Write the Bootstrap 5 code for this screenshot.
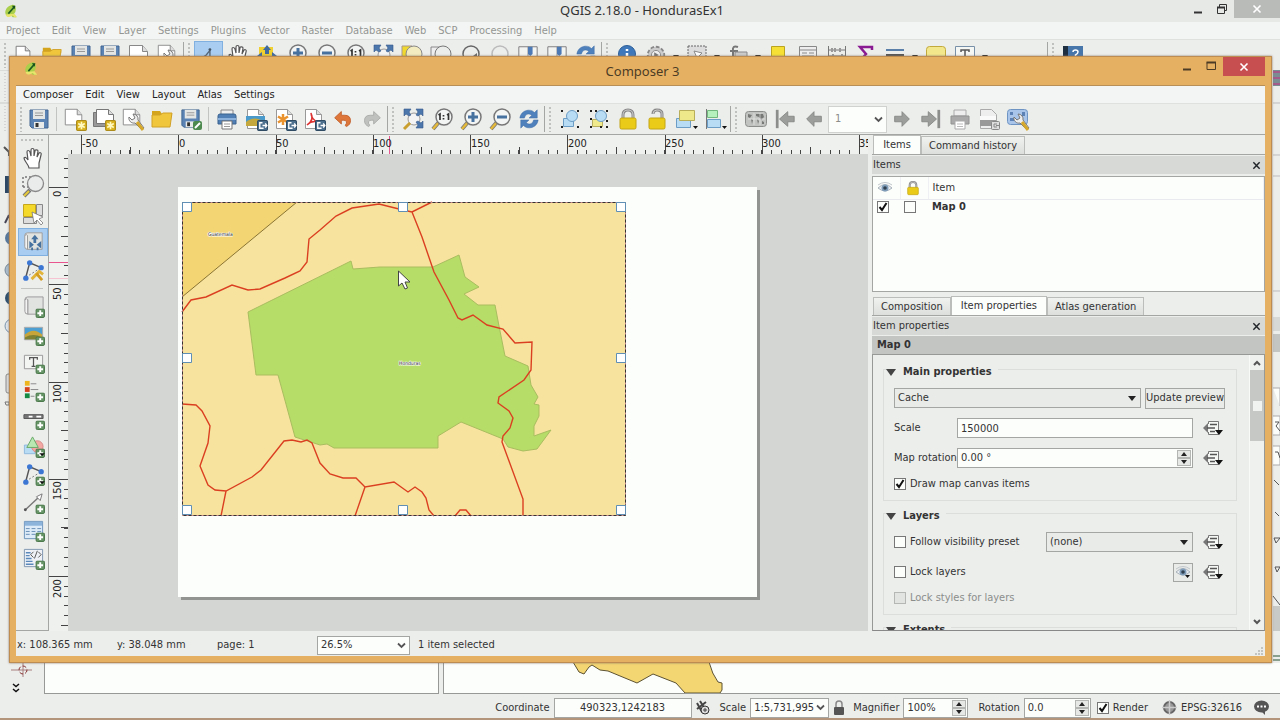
<!DOCTYPE html>
<html lang="en">
<head>
<meta charset="utf-8">
<meta name="viewport" content="width=device-width, initial-scale=1">
<title>QGIS 2.18.0 - HondurasEx1</title>
<link href="https://cdn.jsdelivr.net/npm/bootstrap@5.3.0/dist/css/bootstrap.min.css" rel="stylesheet">
<style>
:root{--face:#eceeec;--ink:#333;--line:#a4a6a4}
body{font:11px/14px "DejaVu Sans Condensed","DejaVu Sans",sans-serif;color:var(--ink);background:var(--face)}
.desk{min-height:720px}
button{color:inherit;font:inherit}
svg{flex:none;display:block}
.title-text{font:13px/20px "Noto Sans",sans-serif}
.win-title,.menu,.tools,.lower,.status,.taskbar,.comp-title,.comp-status{flex-shrink:0}
.half{flex:1 1 0}
.win-title{height:22px;background:#e7e9e7}
.win-ctl{width:30px;height:18px;border:0;background:none;padding:0}
.win-ctl.narrow{width:24px}
.win-ctl.gray-x{width:46px;background:#b9bbb9}
.menu{height:17px;background:#f3f5f4;column-gap:12px;padding-left:6px}
.menu a{color:#939593;text-decoration:none}
.menu .nav-link{padding:0}
.tools{background:var(--face)}
.main-tools{height:31px;border-top:1px solid #dfe1df}
.tbtn{width:29px;height:28px;border:1px solid transparent;background:none;padding:0;display:flex;align-items:center;justify-content:center;flex:none}
.tbtn.on{background:#a9cdf0;border-color:#7fb0e0}
.drop-mark{width:12px;display:flex;justify-content:center;padding-top:4px}
.grip{width:8px;height:26px;flex:none;background:radial-gradient(circle,#bfc1bf 1px,transparent 1px) 3px 0/4px 4px repeat-y}
.grip.split{width:11px;border-left:1px solid #a4a6a4;margin-left:1px;background-position:3px 0}
.sep{width:1px;height:24px;background:#c2c4c2;margin:0 3px;flex:none}
.lower{height:31px}
.pane{background:#fcfefc;border:1px solid #979997;border-top:0}
.pane-left{width:395px}
.status{height:24px;padding-top:3px}
.taskbar{height:2px;background:#b2957a}
.field{height:20px;border:1px solid var(--line);background:#fcfefc;border-radius:0;font:inherit;color:var(--ink);padding:0 3px;min-width:0}
select.field{appearance:none;background:#fcfefc url("data:image/svg+xml,%3Csvg xmlns='http://www.w3.org/2000/svg' viewBox='0 0 9 7'%3E%3Cpath d='M1 1.500l3.500 3.500 3.500-3.500' fill='none' stroke='%23555' stroke-width='1.800'/%3E%3C/svg%3E") no-repeat right 3px center/9px 7px}
select.field.flat{background:#e9ebe9 url("data:image/svg+xml,%3Csvg xmlns='http://www.w3.org/2000/svg' viewBox='0 0 8 5'%3E%3Cpath d='M0 0h8l-4 5z' fill='%23222'/%3E%3C/svg%3E") no-repeat right 4px center/8px 5px}
.spin{display:flex;border:1px solid var(--line);height:20px;background:#fcfefc;padding:1px}
.spin input{border:0;background:none;font:inherit;color:inherit;min-width:0;padding:0 2px;outline:0}
.spin button{width:14px;height:8px;border:1px solid #b4b6b4;background:#e6e8e6;padding:0;display:flex;align-items:center;justify-content:center}
.tick{appearance:none;width:12px;height:12px;margin:0;border:1px solid #777;background:#fcfefc;border-radius:0;flex:none}
.tick:checked{background:#fcfefc url("data:image/svg+xml,%3Csvg xmlns='http://www.w3.org/2000/svg' viewBox='0 0 10 10'%3E%3Cpath d='M1.500 5l2.500 3 4.500-7' fill='none' stroke='%23111' stroke-width='2'/%3E%3C/svg%3E") center/10px}
.tick:disabled{background:#e2e4e2;border-color:#b5b7b5}
.dim{color:#8b8d8b}
select.page-pick{width:59px;height:27px;border-color:#d0d2d0;padding-left:6px;color:#8b8d8b}

/* Composer window, floating on the main window */
.composer{position:absolute;top:56px;right:8px;bottom:57px;left:9px;background:#e6b062;border:1px solid #bd8c50;padding:0 6px 6px;box-shadow:0 0 2px #8a7a66}
.comp-title{height:28px;color:#4c3c25}
.comp-title .red-x{width:42px;height:19px;background:#c84f50}
.comp-face{background:var(--face);border-top:1px solid #b98f58}
.comp-menu{height:17px;padding-left:7px}
.comp-menu a{color:#222}
.comp-tools{height:32px;border-top:1px solid #dfe1df;border-bottom:1px solid var(--line)}
.side{width:33px;border-right:1px solid var(--line);border-bottom:1px solid var(--line)}
.side .tbtn{width:30px;height:28px;margin-left:2px}
.side-grip{height:9px;margin:0 4px;background:radial-gradient(circle,#bfc1bf 1px,transparent 1px) 0 3px/4px 4px repeat-x}
.side-sep{height:1px;margin:4px 5px 3px;background:#c2c4c2}
.sheet{display:grid;grid-template:19px minmax(0,1fr)/19px minmax(0,1fr);min-width:0;background:#eff1ef}
.sheet text{font-size:11px;fill:#222}
.sheet .place{font-size:5px;stroke:#fff;stroke-width:1px;paint-order:stroke}
.canvas{background:#d4d6d3}
.docks{width:393px;margin-left:4px}
.tabs{height:20px;border-bottom:1px solid var(--line);padding-left:1px;flex:none}
.tabs button{height:18px;border:1px solid #bbbdbb;border-bottom:0;background:linear-gradient(#f0f2f0,#dddfdd);padding:0 7px}
.tabs button.active{height:19px;background:#fcfefc}
.dock-title{height:18px;background:#d7d9d7;margin-top:1px;padding:0 4px 0 1px;flex:none}
.dock-title button{border:0;background:none;padding:0}
.items{height:116px;border:1px solid var(--line);background:#fcfefc;margin-top:2px;flex:none}
.items table{width:100%}
.items th{font-weight:400;height:22px;border-bottom:1px solid #e8eaf0;border-right:1px solid #eef0f4}
.items td,.items th{padding:0 0 0 4px;vertical-align:middle}
.items td{height:15px}
.item-name{height:18px;background:#c3c5c3;margin-top:1px;padding-left:5px;flex:none}
.props{border:1px solid #979997;border-bottom-color:#888;overflow:hidden}
.props form{padding:3px 12px 0 10px}
.box{border:1px solid #dcdedc;padding:8px 11px 10px 10px;margin:0 0 1px}
.box legend{float:none;width:auto;height:22px;margin:0 0 0 -8px;padding:6px 6px 0 0;font:bold 11px/16px "DejaVu Sans Condensed",sans-serif;display:flex;align-items:center;gap:7px;background:var(--face)}
.line{height:20px;display:flex;align-items:center}
.line.short{height:12px}
.lab{width:63px;flex:none;white-space:nowrap}
.plain{border:1px solid var(--line);background:#e9ebe9;height:21px;padding:0}
.dd{border:0;background:none;padding:0;width:22px;margin-left:10px;flex:none}
.bar{width:15px;background:#eff1ef;border-left:1px solid #f8faf8}
.thumb{height:71px;background:#c6c8c6}
.thumb i{width:9px;height:10px;background:#f1f3f1}
.comp-status{height:25px;padding:3px 0 0 1px}
.cell{width:100px}
.zoom-box{width:93px}
</style>
</head>
<body>
<svg width="0" height="0" class="position-absolute" aria-hidden="true">
<defs>
<symbol id="logo" viewBox="0 0 16 16"><path d="M2 12C0 7 4 2 9 1c5-1 5 5 4 8l-2 3 3 3h-4l-2-2c-3 2-5 1-6-1z" fill="#a9cf4b"/><path d="M2 12c0 4 5 3 8 1l2 2h3l-3-4" fill="#e8e56c"/><path d="M5 11L12 3" stroke="#1c5a22" stroke-width="1.800"/><path d="M9 2h4l-1 4z" fill="#17501d"/></symbol>
<symbol id="plus" viewBox="0 0 10 10"><rect x=".5" y=".5" width="9" height="9" rx="1.500" fill="#679467" stroke="#477447"/><path d="M5 2v6M2 5h6" stroke="#fff" stroke-width="2"/></symbol>
<symbol id="star" viewBox="0 0 10 10"><rect x=".5" y=".5" width="9" height="9" rx="1" fill="#d8b11e" stroke="#ad8b1a"/><path d="M5 1.500v7M2 3.200l6 3.600M8 3.200L2 6.800" stroke="#fff9c0" stroke-width="1.500"/></symbol>
<symbol id="out" viewBox="0 0 10 10"><rect x=".5" y=".5" width="9" height="9" rx="1" fill="#4d708f" stroke="#2f4b64"/><path d="M5 2.500H2.500v5H6M5 5h4M7.500 3L9 5 7.500 7" fill="none" stroke="#fff" stroke-width="1.200"/></symbol>
<symbol id="save" viewBox="0 0 24 24"><path d="M3 3h18v18H5l-2-2z" fill="#5b84b5" stroke="#41658f"/><path d="M6 3h12v9H6z" fill="#e4e6e6"/><path d="M8 6h8M8 8.500h8" stroke="#999"/><path d="M7 15h10v6H7z" fill="#e9ebeb"/><path d="M8.500 16h3v4h-3z" fill="#333"/></symbol>
<symbol id="page" viewBox="0 0 24 24"><path d="M2.500 2.500h13l5 6v11h-18z" fill="#fff" stroke="#888"/><path d="M15.500 2.500v6h5" fill="#ddd" stroke="#888"/></symbol>
<symbol id="newp" viewBox="0 0 24 24"><use href="#page" width="22" height="22"/><use href="#star" x="13" y="13" width="11" height="11"/></symbol>
<symbol id="dup" viewBox="0 0 24 24"><path d="M1.500 5.500h16v14h-16z" fill="#999" stroke="#777"/><path d="M4.500 2.500h12l5 5v9h-17z" fill="#fff" stroke="#777"/><path d="M16.500 2.500v5h5" fill="#ddd" stroke="#777"/><use href="#star" x="13" y="13" width="11" height="11"/></symbol>
<symbol id="wrench" viewBox="0 0 24 24"><path d="M12 7a5 5 0 0 1 5 6l6 8-2 2-7-7a5 5 0 0 1-6-6l3 3 3-2z" fill="#eee" stroke="#777"/><path d="M16 15l6 8" stroke="#d5a82c" stroke-width="3"/></symbol>
<symbol id="manage" viewBox="0 0 24 24"><use href="#page" width="22" height="22"/><use href="#wrench" width="24" height="24"/></symbol>
<symbol id="folder" viewBox="0 0 24 24"><path d="M2 4h8l2 3h10v3H2z" fill="#d4a51c"/><path d="M2 20V8h8l3-2h9l-2 14z" fill="#f0c63c" stroke="#d0a127"/></symbol>
<symbol id="saveas" viewBox="0 0 24 24"><use href="#save" width="23" height="23"/><rect x="14" y="14" width="9" height="9" rx="2" fill="#4c8a50"/><path d="M16 21l5-5" stroke="#fff" stroke-width="2"/></symbol>
<symbol id="print" viewBox="0 0 24 24"><path d="M6 3h12v6H6z" fill="#eee" stroke="#888"/><path d="M3 9q0-2 2-2h14q2 0 2 2v8H3z" fill="#4f7fb5" stroke="#3b628e"/><path d="M3 12h18" stroke="#8cb1da" stroke-width="2"/><path d="M7 14h10v8H7z" fill="#fff" stroke="#777"/><path d="M9 17h6M9 19.500h6" stroke="#999"/></symbol>
<symbol id="sheetp" viewBox="0 0 24 24"><path d="M3.500 2.500h11l5 5v14h-16z" fill="#fff" stroke="#999"/><path d="M14.500 2.500v5h5" fill="#ddd" stroke="#999"/></symbol>
<symbol id="eximg" viewBox="0 0 24 24"><use href="#sheetp" width="24" height="24"/><path d="M2 9h19v9H2z" fill="#4a9bcb"/><path d="M2 15q8-7 19 0v4H2z" fill="#c4a83e"/><use href="#out" x="13" y="13" width="11" height="11"/></symbol>
<symbol id="exsvg" viewBox="0 0 24 24"><use href="#sheetp" width="24" height="24"/><path d="M10 7v11M5 9.500l10 6M15 9.500l-10 6" stroke="#ea932e" stroke-width="2.500"/><use href="#out" x="13" y="13" width="11" height="11"/></symbol>
<symbol id="expdf" viewBox="0 0 24 24"><use href="#sheetp" width="24" height="24"/><path d="M9 6c3 6-1 10-4 12 3-3 7-4 11-3-4-1-7-5-7-9z" fill="none" stroke="#d33" stroke-width="1.500"/><use href="#out" x="13" y="13" width="11" height="11"/></symbol>
<symbol id="undo" viewBox="0 0 24 24"><path d="M10 3v4.500h4q7 0 7 6.500 0 5-5 7-2-1-1-2 2-2 1-4-1-1.500-3-1.500H10V18l-8-7.500z" fill="#dd7638" stroke="#c05c26"/></symbol>
<symbol id="redo" viewBox="0 0 24 24"><path d="M14 3v4.500h-4q-7 0-7 6.500 0 5 5 7 2-1 1-2-2-2-1-4 1-1.500 3-1.500h3V18l8-7.500z" fill="#bfc1bf" stroke="#a5a7a5"/></symbol>
<symbol id="lens" viewBox="0 0 24 24"><path d="M9 15l-6 7" stroke="#777" stroke-width="4"/><path d="M9 15l-6 7" stroke="#e5b93a" stroke-width="2.500"/><circle cx="14" cy="10" r="8" fill="#f3f5f5" stroke="#777" stroke-width="1.500"/></symbol>
<symbol id="z11" viewBox="0 0 24 24"><use href="#lens" width="24" height="24"/><path d="M8.500 8l1.500-1v6M18.500 13V7L17 8M13.500 8v1.500M13.500 11v1.500" fill="none" stroke="#333" stroke-width="1.700"/></symbol>
<symbol id="zin" viewBox="0 0 24 24"><use href="#lens" width="24" height="24"/><path d="M14 5v10M9 10h10" stroke="#47719f" stroke-width="3"/></symbol>
<symbol id="zout" viewBox="0 0 24 24"><use href="#lens" width="24" height="24"/><path d="M9 10h10" stroke="#47719f" stroke-width="3"/></symbol>
<symbol id="zfull" viewBox="0 0 24 24"><circle cx="13" cy="12" r="6" fill="#f4f4f4" stroke="#999"/><path d="M9 16l-6 6" stroke="#c9a030" stroke-width="3"/><path d="M3 2h7L8 5l2 3-2 1-3-2-2 2zM22 2v7l-2-2-3 2-2-1 2-3-2-3zM22 21v-7l-2 2-3-2-2 1 2 3-2 3z" fill="#4c77ad" stroke="#35598a" stroke-width=".6"/></symbol>
<symbol id="refresh" viewBox="0 0 24 24"><path d="M2 11C3 2 14 0 18 5l3-3v9h-9l3-3c-4-3-7-1-8 3zM22 13c-1 9-12 11-16 6l-3 3v-9h9l-3 3c4 3 7 1 8-3z" fill="#4f81bd" stroke="#3c6aa1" stroke-width=".5"/></symbol>
<symbol id="dots" viewBox="0 0 24 24"><path d="M3 3h2v2H3zM19 3h2v2h-2zM3 19h2v2H3zM19 19h2v2h-2z" fill="#222"/></symbol>
<symbol id="group" viewBox="0 0 24 24"><path d="M5.500 11.500h10v8h-10z" fill="#b9dcf5" stroke="#6c9dc4"/><circle cx="14" cy="9" r="5.500" fill="#b9dcf5" stroke="#6c9dc4"/><use href="#dots" width="24" height="24"/></symbol>
<symbol id="ungroup" viewBox="0 0 24 24"><path d="M5.500 12.500h10v7h-10z" fill="#f0ea8c" stroke="#b8b060"/><circle cx="14" cy="9" r="5.500" fill="#b9dcf5" stroke="#6c9dc4"/><use href="#dots" width="24" height="24"/><path d="M3 11h2v2H3zM8 3h2v2H8zM13 19h2v2h-2zM19 13h2v2h-2z" fill="#222"/></symbol>
<symbol id="lock" viewBox="0 0 24 24"><path d="M7 12V8q0-5 5-5t5 5v4" fill="none" stroke="#888" stroke-width="3"/><path d="M7 12V8q0-5 5-5t5 5v4" fill="none" stroke="#ccc"/><rect x="4" y="11" width="16" height="11" rx="1.500" fill="#eacb18" stroke="#c3a414"/></symbol>
<symbol id="unlock" viewBox="0 0 24 24"><path d="M17 12V7q0-4-5-4-4 0-4 4" fill="none" stroke="#888" stroke-width="3"/><path d="M17 12V7q0-4-5-4-4 0-4 4" fill="none" stroke="#ccc"/><rect x="4" y="11" width="16" height="11" rx="1.500" fill="#eacb18" stroke="#c3a414"/></symbol>
<symbol id="raise" viewBox="0 0 24 24"><path d="M2.500 11.500h14v9h-14z" fill="#b9dcf5" stroke="#6c9dc4"/><path d="M5.500 3.500h15v10h-15z" fill="#eee88a" stroke="#b8ad58"/><path d="M19 19h5l-2.500 3z" fill="#111"/></symbol>
<symbol id="align" viewBox="0 0 24 24"><path d="M3.500 2v20" stroke="#777"/><path d="M4.500 3.500h10v7h-10z" fill="#b6f0bd" stroke="#74b77e"/><path d="M4.500 12.500h13v8h-13z" fill="#b9dcf5" stroke="#6c9dc4"/><path d="M19 19h5l-2.500 3z" fill="#111"/></symbol>
<symbol id="atlas" viewBox="0 0 24 24"><rect x="1.500" y="4.500" width="21" height="15" rx="3" fill="#c1c3c1" stroke="#8c8e8c"/><path d="M4 7l4 1-2 3-2-1zM7 12l2 1-1 4zM12 7h7l1 3-3 3-2-3-3-1zM13 12l2 2-1 3zM18 14l2 1v2h-2z" fill="#777977"/><path d="M10 6v12M16 6v12M4 12h17" stroke="#eee" stroke-width=".6"/></symbol>
<symbol id="next" viewBox="0 0 24 24"><path d="M4 9h8V4l8 8-8 8v-5H4z" fill="#9c9e9c" stroke="#868886"/></symbol>
<symbol id="prev" viewBox="0 0 24 24"><path d="M20 9h-8V4l-8 8 8 8v-5h8z" fill="#9c9e9c" stroke="#868886"/></symbol>
<symbol id="first" viewBox="0 0 24 24"><path d="M22 9h-7V4l-9 8 9 8v-5h7z" fill="#9c9e9c" stroke="#868886"/><path d="M3.500 2v20" stroke="#8c8e8c" stroke-width="3"/></symbol>
<symbol id="last" viewBox="0 0 24 24"><path d="M2 9h7V4l9 8-9 8v-5H2z" fill="#9c9e9c" stroke="#868886"/><path d="M20.500 2v20" stroke="#8c8e8c" stroke-width="3"/></symbol>
<symbol id="printg" viewBox="0 0 24 24"><path d="M6 3h12v6H6z" fill="#eee" stroke="#aaa"/><path d="M3 9h18v8H3z" fill="#aaa" stroke="#909290"/><path d="M7 14h10v8H7z" fill="#fff" stroke="#aaa"/><path d="M9 17h6M9 19.500h6" stroke="#bbb"/></symbol>
<symbol id="exg" viewBox="0 0 24 24"><path d="M3.500 2.500h11l5 5v14h-16z" fill="#eee" stroke="#aaa"/><path d="M3 9h16v5H3z" fill="#fafafa"/><path d="M3 13h16v6H3z" fill="#999"/><rect x="14.500" y="14.500" width="8" height="8" rx="1" fill="#ddd" stroke="#888"/><path d="M20 17h-3v3h3M19 18.500h4" fill="none" stroke="#888"/></symbol>
<symbol id="atset" viewBox="0 0 24 24"><rect x="1.500" y="2.500" width="20" height="15" rx="3" fill="#a9c6ea" stroke="#6e94c4"/><path d="M4 5h3v3H4zM4 11h4v3H4zM16 5h3v4h-3z" fill="#5d82b5"/><use href="#wrench" width="24" height="24"/></symbol>
<symbol id="hand" viewBox="0 0 24 24"><path d="M8 22c0-3-5-7-5-10 1-1 2-1 4 2L6 6c0-2 2-2 3 0l1 4V4c0-2 3-2 3 0v6l1-5c0-2 3-1 3 0l-1 6 2-4c1-1 3 0 2 2l-2 8v5z" fill="#fff" stroke="#555" stroke-width="1.200"/></symbol>
<symbol id="zsel" viewBox="0 0 24 24"><path d="M2 13V3h11M2 13h5" fill="none" stroke="#777" stroke-width="1.500" stroke-dasharray="2 2"/><path d="M9 16l-6 6" stroke="#777" stroke-width="4"/><path d="M8 17l-5 5" stroke="#e5c93a" stroke-width="2"/><circle cx="14.500" cy="9.500" r="8" fill="#e9ebeb" fill-opacity=".9" stroke="#888" stroke-width="1.300"/></symbol>
<symbol id="selitem" viewBox="0 0 24 24"><path d="M15.500 2.500h6v11h-6zM2.500 15.500h13v6h-13z" fill="#ddd" stroke="#888"/><path d="M2.500 2.500h12v12h-12z" fill="#f5d92a" stroke="#c6a71c"/><path d="M11 10l2 11 3-3 4 5 2-2-4-4 4-2z" fill="#fff" stroke="#777" stroke-width=".8"/></symbol>
<symbol id="mapp" viewBox="0 0 24 24"><path d="M3 5q0-3 3-3h16v18H6V5z" fill="#e1e3e1" stroke="#999"/><path d="M3 5v12q0 3 3 3V5q-1-2-3 0z" fill="#f3f3f3" stroke="#999"/></symbol>
<symbol id="movec" viewBox="0 0 24 24"><use href="#mapp" width="24" height="24"/><path d="M14 4l4 5h-2.500v4h-3V9H10zM8 11l5 4-5 4zM21 11l-5 4 5 4zM10 18h2v3h-2zM16 18h2v3h-2z" fill="#46719f"/></symbol>
<symbol id="nodes" viewBox="0 0 24 24"><path d="M4 19L8 4l12 5" fill="none" stroke="#555" stroke-width="1.500"/><path d="M4 19L20 9" stroke="#777" stroke-dasharray="2 2"/><circle cx="8" cy="4" r="2.800" fill="#3d77d4"/><circle cx="20" cy="9" r="2.800" fill="#3d77d4"/><circle cx="4" cy="20" r="2.800" fill="#3d77d4"/></symbol>
<symbol id="editn" viewBox="0 0 24 24"><use href="#nodes" width="24" height="24"/><path d="M10 21l8-8 4 3" fill="none" stroke="#e2b53a" stroke-width="3"/><path d="M15 15l6 7" stroke="#d39c22" stroke-width="3"/></symbol>
<symbol id="addmap" viewBox="0 0 24 24"><use href="#mapp" width="24" height="24"/><use href="#plus" x="14" y="14" width="10" height="10"/></symbol>
<symbol id="addimg" viewBox="0 0 24 24"><path d="M2.500 4.500h19v13h-19z" fill="#4c9fd0" stroke="#aaa"/><path d="M3 12q9-8 18 0v5H3z" fill="#c8a53a"/><path d="M3 15q9-5 18 0v2H3z" fill="#7d8131"/><use href="#plus" x="14" y="14" width="10" height="10"/></symbol>
<symbol id="addlab" viewBox="0 0 24 24"><path d="M2.500 4.500h19v14h-19z" fill="#f3f5f3" stroke="#999"/><path d="M8 9V7h8v2M12 7v9M10 16h4" fill="none" stroke="#555" stroke-width="1.300"/><use href="#plus" x="14" y="14" width="10" height="10"/></symbol>
<symbol id="addleg" viewBox="0 0 24 24"><path d="M3 2h5v5H3z" fill="#edb51e"/><path d="M3 8.500h5v5H3z" fill="#d3421d"/><path d="M3 15h5v5H3z" fill="#158a42"/><path d="M9 5h6M9 11h8M9 18h4" stroke="#888"/><use href="#plus" x="14" y="14" width="10" height="10"/></symbol>
<symbol id="addbar" viewBox="0 0 24 24"><path d="M2 8h20v4H2z" fill="#777" stroke="#555"/><path d="M7 10h4M15 10h5" stroke="#fff" stroke-width="2"/><use href="#plus" x="14" y="14" width="10" height="10"/></symbol>
<symbol id="addshape" viewBox="0 0 24 24"><path d="M2.500 10.500h11v9h-11z" fill="#b9dcf5" stroke="#8eb9dc"/><circle cx="16" cy="12" r="6" fill="#f3a8a3" stroke="#d68b88"/><path d="M11 2l6 11H5z" fill="#b9e8b0" stroke="#6aa86a"/><use href="#plus" x="14" y="14" width="10" height="10"/><path d="M18 19h6l-3 3z" fill="#111"/></symbol>
<symbol id="addnode" viewBox="0 0 24 24"><use href="#nodes" width="24" height="24"/><use href="#plus" x="14" y="14" width="10" height="10"/><path d="M18 19h6l-3 3z" fill="#111"/></symbol>
<symbol id="addarrow" viewBox="0 0 24 24"><path d="M3 20L18 6" stroke="#777" stroke-width="1.500"/><path d="M21 3l-2 7-4-4z" fill="#fff" stroke="#777"/><circle cx="3.500" cy="19.500" r="1.500" fill="#555"/><use href="#plus" x="14" y="14" width="10" height="10"/></symbol>
<symbol id="addtab" viewBox="0 0 24 24"><path d="M2.500 2.500h19v18h-19z" fill="#dcebf7" stroke="#6c93ba"/><path d="M3 3h18v4H3z" fill="#8db5dc"/><path d="M4 10h16M4 13h16M4 16h12" stroke="#678db5" stroke-dasharray="4 2"/><use href="#plus" x="14" y="14" width="10" height="10"/></symbol>
<symbol id="addhtml" viewBox="0 0 24 24"><path d="M2.500 2.500h19v18h-19z" fill="#eef2f6" stroke="#7e96b0"/><path d="M4 6h5M4 9h4M4 12h6M4 15h7M4 18h8" stroke="#5a88bb" stroke-width="1.500"/><path d="M12 5L9 8l3 3M17 5l3 3-3 3M16 4l-3 8" fill="none" stroke="#555"/><use href="#plus" x="14" y="14" width="10" height="10"/></symbol>
<symbol id="eye" viewBox="0 0 16 16"><path d="M1 8q7-7 14 0-7 6-14 0z" fill="#e9eef2" stroke="#a9b2ba"/><circle cx="8" cy="8" r="3.500" fill="#7f9cb8"/><circle cx="8" cy="8" r="1.800" fill="#30404f"/><path d="M1 5q7-5 14 0" fill="none" stroke="#c0c6ca"/></symbol>
<symbol id="override" viewBox="0 0 20 16"><path d="M0 8l5-5v10z" fill="#777"/><path d="M5.500 4V1.500h10v13h-10V12" fill="#f6f8f6" stroke="#777"/><path d="M4 8h8M7 4.500h7M7 11.500h5" stroke="#555" stroke-width="1.500"/><path d="M12 10h8l-4 5z" fill="#111"/></symbol>
<symbol id="x" viewBox="0 0 10 10"><path d="M1.500 1.500l7 7M8.500 1.500l-7 7" stroke="currentColor" stroke-width="1.600"/></symbol>
<symbol id="min" viewBox="0 0 12 12"><path d="M2 9.500h8" stroke="currentColor" stroke-width="2"/></symbol>
<symbol id="max" viewBox="0 0 12 12"><path d="M2 2.500h8.500v7H2z" fill="none" stroke="currentColor"/><path d="M1.500 2.500h9.500" stroke="currentColor" stroke-width="2"/></symbol>
<symbol id="restore" viewBox="0 0 12 12"><path d="M1.500 4.500h7v6h-7zM3.500 4V1.500h7v6H9" fill="none" stroke="currentColor"/><path d="M1 4.500h8" stroke="currentColor" stroke-width="2"/></symbol>
<symbol id="down" viewBox="0 0 6 4"><path d="M0 0h6L3 4z" fill="#222"/></symbol>
<symbol id="up" viewBox="0 0 6 4"><path d="M0 4h6L3 0z" fill="#222"/></symbol>
<symbol id="tri" viewBox="0 0 10 7"><path d="M0 0h10L5 7z" fill="#444"/></symbol>
<symbol id="gear" viewBox="0 0 24 24"><circle cx="12" cy="12" r="9" fill="#ccc" stroke="#888" stroke-width="2" stroke-dasharray="4 2"/><circle cx="12" cy="12" r="5" fill="#eee" stroke="#888"/><path d="M10 9l5 3-5 3z" fill="#777"/></symbol>
<symbol id="book" viewBox="0 0 24 24"><path d="M2 3h20v19H2z" fill="#f2f4f2" stroke="#777"/><path d="M12 3v18" stroke="#888"/><path d="M12 3h5v8l-2.500 2-2.500-2z" fill="#4d79b4"/></symbol>
</defs>
</svg>

<div class="desk vh-100 position-relative d-flex flex-column overflow-hidden">
  <!-- Main QGIS window -->
  <header class="win-title d-flex align-items-start">
    <div class="half ps-1 pt-1"><svg width="14" height="14"><use href="#logo"/></svg></div>
    <h1 class="title-text m-0">QGIS 2.18.0 - HondurasEx1</h1>
    <div class="half d-flex justify-content-end">
      <button class="win-ctl narrow" aria-label="Minimize"><svg class="m-auto" width="12" height="12"><use href="#min"/></svg></button>
      <button class="win-ctl narrow" aria-label="Restore"><svg class="m-auto" width="12" height="12"><use href="#restore"/></svg></button>
      <button class="win-ctl gray-x text-white" aria-label="Close"><svg class="m-auto" width="10" height="10"><use href="#x"/></svg></button>
    </div>
  </header>
  <nav class="menu nav align-items-center flex-nowrap">
    <a class="nav-link" href="#">Project</a><a class="nav-link" href="#">Edit</a><a class="nav-link" href="#">View</a><a class="nav-link" href="#">Layer</a><a class="nav-link" href="#">Settings</a><a class="nav-link" href="#">Plugins</a><a class="nav-link" href="#">Vector</a><a class="nav-link" href="#">Raster</a><a class="nav-link" href="#">Database</a><a class="nav-link" href="#">Web</a><a class="nav-link" href="#">SCP</a><a class="nav-link" href="#">Processing</a><a class="nav-link" href="#">Help</a>
  </nav>
  <div class="tools main-tools d-flex align-items-center" aria-hidden="true">
    <span class="grip"></span>
    <span class="tbtn"><svg width="22" height="22" viewBox="0 0 24 24"><path d="M4.500 2.500h10l5 5v15h-15z" fill="#fff" stroke="#777"/><path d="M14.500 2.500v5h5" fill="#ddd" stroke="#777"/></svg></span>
    <span class="tbtn"><svg width="22" height="22"><use href="#folder"/></svg></span>
    <span class="tbtn"><svg width="24" height="24"><use href="#save"/></svg></span>
    <span class="tbtn"><svg width="24" height="24"><use href="#save"/></svg></span>
    <span class="tbtn"><svg width="24" height="24"><use href="#page"/></svg></span>
    <span class="tbtn"><svg width="24" height="24"><use href="#manage"/></svg></span>
    <span class="grip split"></span>
    <span class="tbtn on"><svg width="22" height="22" viewBox="0 0 24 24"><path d="M3 16l6-4 4-5v6l6 5" fill="none" stroke="#567" stroke-width="1.500"/><circle cx="13" cy="6" r="1.500" fill="#456"/></svg></span>
    <span class="tbtn"><svg width="24" height="24"><use href="#hand"/></svg></span>
    <span class="tbtn"><svg width="24" height="24" viewBox="0 0 24 24"><path d="M4 4h14v14H4z" fill="#f0cf30"/><path d="M12 2l4 5h-2v4h-4V7H8zM2 13l5-4v8zM22 13l-5-4v8z" fill="#3f6a9f"/></svg></span>
    <span class="tbtn"><svg width="24" height="24"><use href="#zin"/></svg></span>
    <span class="tbtn"><svg width="24" height="24"><use href="#zout"/></svg></span>
    <span class="tbtn"><svg width="24" height="24"><use href="#z11"/></svg></span>
    <span class="tbtn"><svg width="24" height="24"><use href="#zfull"/></svg></span>
    <span class="tbtn"><svg width="24" height="24" viewBox="0 0 24 24"><path d="M2 3h10v14H2z" fill="#f0d92c" stroke="#a98"/><circle cx="14" cy="11" r="8" fill="#f3ecc0" stroke="#888"/></svg></span>
    <span class="tbtn"><svg width="24" height="24" viewBox="0 0 24 24"><path d="M2 4h10v14H2z" fill="#eee" stroke="#888"/><circle cx="14" cy="11" r="8" fill="#ebedeb" stroke="#777"/></svg></span>
    <span class="tbtn"><svg width="24" height="24" viewBox="0 0 24 24"><circle cx="13" cy="11" r="8" fill="#eceeec" stroke="#666" stroke-width="1.500"/><path d="M15 13l4-3v6z" fill="#666"/></svg></span>
    <span class="tbtn"><svg width="24" height="24" viewBox="0 0 24 24"><circle cx="13" cy="11" r="8" fill="#eceeec" stroke="#bbb" stroke-width="1.500"/></svg></span>
    <span class="tbtn"><svg width="22" height="22"><use href="#book"/></svg></span>
    <span class="tbtn"><svg width="22" height="22"><use href="#book"/></svg></span>
    <span class="tbtn"><svg width="22" height="22"><use href="#refresh"/></svg></span>
    <span class="grip split"></span>
    <span class="tbtn"><svg width="20" height="22" viewBox="0 0 20 22"><circle cx="10" cy="10" r="8.500" fill="#4079bb" stroke="#2d5f99"/><path d="M10 5v2M10 9v7" stroke="#fff" stroke-width="2.500"/></svg></span>
    <span class="tbtn"><svg width="22" height="22"><use href="#gear"/></svg></span><span class="drop-mark"><svg width="6" height="4"><use href="#down"/></svg></span>
    <span class="tbtn"><svg width="22" height="22" viewBox="0 0 22 22"><path d="M2 2h18v16H2z" fill="#ddd" stroke="#666" stroke-dasharray="2 1"/><path d="M8 7l8 2-5 5z" fill="#fff" stroke="#888"/></svg></span><span class="drop-mark"><svg width="6" height="4"><use href="#down"/></svg></span>
    <span class="tbtn"><svg width="22" height="22" viewBox="0 0 22 22"><path d="M11 3Q5 1 6 7v7M3 7h8" fill="none" stroke="#777" stroke-width="2"/><path d="M8 8h12v6H8z" fill="#ccc" stroke="#888"/></svg></span><span class="drop-mark"><svg width="6" height="4"><use href="#down"/></svg></span>
    <span class="tbtn"><svg width="20" height="20" viewBox="0 0 20 20"><path d="M2.500 1.500h13v14h-13z" fill="#f7e036" stroke="#bba520"/></svg></span>
    <span class="tbtn"><svg width="20" height="20" viewBox="0 0 20 20"><path d="M1.500 1.500h17v16h-17zM1 5h18" fill="#eee" stroke="#888"/><path d="M4 8h5M11 8h5M4 11h12" stroke="#888"/></svg></span>
    <span class="tbtn"><svg width="20" height="20" viewBox="0 0 20 20"><path d="M1.500 1v18M18.500 1v18M1 5h18M1 11h18" stroke="#777"/><path d="M5 3v4M8 3v4M13 3v4M6 9v4M15 9v4" stroke="#999" stroke-width="2"/></svg></span>
    <span class="tbtn"><svg width="20" height="20" viewBox="0 0 20 20"><path d="M16 5V2H4l6 7-6 7h12v-3" fill="none" stroke="#8a1a91" stroke-width="2.500"/></svg></span>
    <span class="tbtn"><svg width="20" height="20" viewBox="0 0 20 20"><path d="M1 5h18" stroke="#5a7fa8" stroke-width="2"/><path d="M1 10h18" stroke="#555" stroke-width="2"/></svg></span><span class="drop-mark"><svg width="6" height="4"><use href="#down"/></svg></span>
    <span class="tbtn"><svg width="22" height="22" viewBox="0 0 22 22"><rect x="1.500" y="2.500" width="19" height="14" rx="3" fill="#f3e78c" stroke="#c2a93c"/></svg></span>
    <span class="tbtn"><svg width="20" height="20" viewBox="0 0 20 20"><path d="M.5 1.500h19v17H.5z" fill="#f5f7f5" stroke="#7890a8"/><path d="M6 7V5h8v2M10 5v10" fill="none" stroke="#555" stroke-width="1.500"/></svg></span><span class="drop-mark"><svg width="6" height="4"><use href="#down"/></svg></span>
    <span class="grip split" style="margin-left:56px"></span>
    <span class="tbtn"><svg width="20" height="20" viewBox="0 0 20 20"><path d="M0 1h5v18H0z" fill="#1f2f42"/><path d="M5 1h15v18H5z" fill="#4776ab"/><path d="M10 7q0-2 2.500-2T15 7q0 1.500-2.500 3v2" fill="none" stroke="#fff" stroke-width="1.500"/></svg></span>
  </div>
  <div class="flex-grow-1 d-flex justify-content-between overflow-hidden" style="flex-basis:0" aria-hidden="true">
    <svg width="9" height="400" viewBox="0 70 9 400"><path d="M0 70h9M0 103h9" stroke="#c8cac8"/><path d="M5 73v28M5 106v26" stroke="#bbb" stroke-dasharray="1 2"/><path d="M4 147l5 5v4" fill="none" stroke="#555" stroke-width="2"/><path d="M5 176h4v17H5z" fill="#2c4765"/><path d="M5 223l4-8" stroke="#445" stroke-width="2"/><circle cx="12" cy="238" r="7" fill="#57789b"/><circle cx="12" cy="270" r="7" fill="#a9bccb" stroke="#789"/><circle cx="12" cy="298" r="7" fill="#30506e"/><circle cx="12" cy="326" r="7" fill="#dde4ea" stroke="#7b93ab"/><rect x="6" y="374" width="9" height="19" rx="2" fill="#ddd" stroke="#888"/><path d="M5 402h4v3H6z" fill="none" stroke="#777"/></svg>
    <svg width="8" height="594" viewBox="0 70 8 594"><path d="M1 70h7v16H1z" fill="#7a8d92"/><path d="M1 72h7M1 78h7M1 84h7" stroke="#a25b8a" stroke-width="2"/><path d="M1 103h7M1 155h7M1 176h7M1 291h7" stroke="#bbb"/><path d="M1 317h7v14H1z" fill="#d7d9d7"/><path d="M1 334h7v18H1z" fill="#c3c5c3"/><path d="M1 388h7v18M1 416h7v19H1M1 446h7v19H1" fill="#fcfefc" stroke="#aaa"/><path d="M3 422h4l-3 4 4 5M3 452h3l2 6M2 480l5 5M3 512l4 4M2 538h6l-4 5zM3 567h5l-3 5zM1 596l7 9" fill="none" stroke="#555"/><path d="M1 606h7v25H1z" fill="#c8cac8"/><path d="M1 656h7M1 660h7" stroke="#8aa08e" stroke-width="2"/></svg>
  </div>
  <div class="lower d-flex">
    <svg width="44" height="31" viewBox="0 0 44 31"><path d="M11 7h21M23 0v14" stroke="#a77f7f"/><circle cx="23" cy="7" r="4" fill="none" stroke="#833" stroke-dasharray="4 2"/><path d="M13 21l3 2.500 3-2.500M13 26l3 2.500 3-2.500" fill="none" stroke="#111" stroke-width="1.500"/></svg>
    <div class="pane pane-left"></div>
    <div class="pane flex-grow-1 ms-1 border-end-0 overflow-hidden"><svg width="300" height="30" viewBox="444 663 300 30"><path d="M573 662l6 10 5 2 5-7 3-2 8 5 8 1 29 12 16-9 23 9 9 10h35l2-3v-7l-4-1q-6-8-9-20z" fill="#f3d571" stroke="#5d5333"/></svg></div>
  </div>
  <footer class="status d-flex align-items-center flex-nowrap">
    <label class="ms-auto" for="coord">Coordinate</label>
    <input id="coord" class="field text-center ms-1" style="width:138px" value="490323,1242183">
    <svg class="ms-1" width="14" height="16" viewBox="0 0 14 16"><path d="M1 3l5 9M4 1l5 8M1 9l9-7" stroke="#444" stroke-width="2"/><circle cx="9" cy="10" r="4" fill="#ddd" stroke="#333"/><path d="M7 10h4M9 8v4" stroke="#444"/></svg>
    <label for="mscale" style="margin-left:10px">Scale</label>
    <select id="mscale" class="field ms-1" style="width:79px"><option>1:5,731,995</option></select>
    <svg class="ms-1" width="12" height="16" viewBox="0 0 12 16"><path d="M3 8V4q0-3 3-3t3 3v4" fill="none" stroke="#888" stroke-width="1.500"/><rect x="1" y="7" width="10" height="8" rx="1" fill="#555"/></svg>
    <label for="magn" class="ms-2">Magnifier</label>
    <div class="spin ms-1" style="width:65px"><input id="magn" class="flex-grow-1" value="100%"><span><button aria-label="Increase"><svg width="6" height="4"><use href="#up"/></svg></button><button aria-label="Decrease"><svg width="6" height="4"><use href="#down"/></svg></button></span></div>
    <label for="mrot" style="margin-left:10px">Rotation</label>
    <div class="spin ms-1" style="width:67px"><input id="mrot" class="flex-grow-1" value="0.0"><span><button aria-label="Increase"><svg width="6" height="4"><use href="#up"/></svg></button><button aria-label="Decrease"><svg width="6" height="4"><use href="#down"/></svg></button></span></div>
    <input type="checkbox" class="tick" id="render" checked style="margin-left:6px"><label for="render" class="ms-1">Render</label>
    <svg style="margin-left:14px" width="15" height="15" viewBox="0 0 15 15"><circle cx="7.500" cy="7.500" r="5.500" fill="#999" stroke="#666" stroke-width="2"/><path d="M7.500 0v15M0 7.500h15" stroke="#ccc" stroke-width="1.500"/></svg>
    <span class="ms-1">EPSG:32616</span>
    <svg style="margin:0 11px 0 12px" width="15" height="15" viewBox="0 0 15 15"><ellipse cx="7.500" cy="6.500" rx="7.500" ry="6" fill="#555"/><path d="M7 11l4 4v-5z" fill="#555"/><path d="M3 6.500h2M6.500 6.500h2M10 6.500h2" stroke="#fff" stroke-width="2"/></svg>
  </footer>
  <div class="taskbar"></div>

  <!-- Print composer window -->
  <section class="composer d-flex flex-column">
    <header class="comp-title d-flex align-items-start">
      <div class="half ps-1 pt-1"><svg class="ms-1" width="14" height="15"><use href="#logo"/></svg></div>
      <h2 class="title-text m-0 pt-1">Composer 3</h2>
      <div class="half d-flex justify-content-end">
        <button class="win-ctl narrow" aria-label="Minimize"><svg class="m-auto" width="12" height="12"><use href="#min"/></svg></button>
        <button class="win-ctl narrow" aria-label="Maximize"><svg class="m-auto" width="12" height="12"><use href="#max"/></svg></button>
        <button class="win-ctl red-x text-white" aria-label="Close"><svg class="m-auto" width="10" height="10"><use href="#x"/></svg></button>
      </div>
    </header>
    <div class="comp-face flex-grow-1 d-flex flex-column" style="min-height:0">
      <nav class="menu comp-menu nav align-items-center flex-nowrap">
        <a class="nav-link" href="#">Composer</a><a class="nav-link" href="#">Edit</a><a class="nav-link" href="#">View</a><a class="nav-link" href="#">Layout</a><a class="nav-link" href="#">Atlas</a><a class="nav-link" href="#">Settings</a>
      </nav>
      <div class="tools comp-tools d-flex align-items-center" role="toolbar" aria-label="Composer">
        <span class="grip"></span>
        <button class="tbtn" aria-label="Save project"><svg width="24" height="24"><use href="#save"/></svg></button>
        <span class="sep"></span>
        <button class="tbtn" aria-label="New composer"><svg width="24" height="24"><use href="#newp"/></svg></button>
        <button class="tbtn" aria-label="Duplicate composer"><svg width="24" height="24"><use href="#dup"/></svg></button>
        <button class="tbtn" aria-label="Composer manager"><svg width="24" height="24"><use href="#manage"/></svg></button>
        <button class="tbtn" aria-label="Add from template"><svg width="24" height="24"><use href="#folder"/></svg></button>
        <button class="tbtn" aria-label="Save as template"><svg width="24" height="24"><use href="#saveas"/></svg></button>
        <span class="sep"></span>
        <button class="tbtn" aria-label="Print"><svg width="24" height="24"><use href="#print"/></svg></button>
        <button class="tbtn" aria-label="Export as image"><svg width="24" height="24"><use href="#eximg"/></svg></button>
        <button class="tbtn" aria-label="Export as SVG"><svg width="24" height="24"><use href="#exsvg"/></svg></button>
        <button class="tbtn" aria-label="Export as PDF"><svg width="24" height="24"><use href="#expdf"/></svg></button>
        <button class="tbtn" aria-label="Undo"><svg width="20" height="20"><use href="#undo"/></svg></button>
        <button class="tbtn" aria-label="Redo"><svg width="20" height="20"><use href="#redo"/></svg></button>
        <span class="grip split"></span>
        <button class="tbtn" aria-label="Zoom full"><svg width="24" height="24"><use href="#zfull"/></svg></button>
        <button class="tbtn" aria-label="Zoom to 100%"><svg width="24" height="24"><use href="#z11"/></svg></button>
        <button class="tbtn" aria-label="Zoom in"><svg width="24" height="24"><use href="#zin"/></svg></button>
        <button class="tbtn" aria-label="Zoom out"><svg width="24" height="24"><use href="#zout"/></svg></button>
        <button class="tbtn" aria-label="Refresh view"><svg width="22" height="22"><use href="#refresh"/></svg></button>
        <span class="grip split"></span>
        <button class="tbtn" aria-label="Group items"><svg width="24" height="24"><use href="#group"/></svg></button>
        <button class="tbtn" aria-label="Ungroup items"><svg width="24" height="24"><use href="#ungroup"/></svg></button>
        <button class="tbtn" aria-label="Lock items"><svg width="24" height="24"><use href="#lock"/></svg></button>
        <button class="tbtn" aria-label="Unlock items"><svg width="24" height="24"><use href="#unlock"/></svg></button>
        <button class="tbtn" aria-label="Raise items"><svg width="24" height="24"><use href="#raise"/></svg></button>
        <button class="tbtn" aria-label="Align items"><svg width="24" height="24"><use href="#align"/></svg></button>
        <span class="grip split"></span>
        <button class="tbtn" aria-label="Preview atlas"><svg width="24" height="24"><use href="#atlas"/></svg></button>
        <button class="tbtn" aria-label="First feature"><svg width="22" height="22"><use href="#first"/></svg></button>
        <button class="tbtn" aria-label="Previous feature"><svg width="22" height="22"><use href="#prev"/></svg></button>
        <select class="field page-pick" aria-label="Atlas page"><option>1</option></select>
        <button class="tbtn" aria-label="Next feature"><svg width="22" height="22"><use href="#next"/></svg></button>
        <button class="tbtn" aria-label="Last feature"><svg width="22" height="22"><use href="#last"/></svg></button>
        <button class="tbtn" aria-label="Print atlas"><svg width="24" height="24"><use href="#printg"/></svg></button>
        <button class="tbtn" aria-label="Export atlas"><svg width="24" height="24"><use href="#exg"/></svg></button>
        <button class="tbtn" aria-label="Atlas settings"><svg width="24" height="24"><use href="#atset"/></svg></button>
      </div>
      <div class="flex-grow-1 d-flex" style="min-height:0">
        <div class="side flex-shrink-0">
          <div class="side-grip"></div>
          <button class="tbtn" aria-label="Pan composer"><svg width="24" height="24"><use href="#hand"/></svg></button>
          <button class="tbtn" aria-label="Zoom"><svg width="24" height="24"><use href="#zsel"/></svg></button>
          <button class="tbtn" aria-label="Select item"><svg width="24" height="24"><use href="#selitem"/></svg></button>
          <button class="tbtn on" aria-label="Move item content"><svg width="22" height="22"><use href="#movec"/></svg></button>
          <button class="tbtn" aria-label="Edit nodes"><svg width="23" height="23"><use href="#editn"/></svg></button>
          <div class="side-sep"></div>
          <button class="tbtn" aria-label="Add map"><svg width="23" height="23"><use href="#addmap"/></svg></button>
          <button class="tbtn" aria-label="Add image"><svg width="23" height="23"><use href="#addimg"/></svg></button>
          <button class="tbtn" aria-label="Add label"><svg width="23" height="23"><use href="#addlab"/></svg></button>
          <button class="tbtn" aria-label="Add legend"><svg width="23" height="23"><use href="#addleg"/></svg></button>
          <button class="tbtn" aria-label="Add scalebar"><svg width="23" height="23"><use href="#addbar"/></svg></button>
          <button class="tbtn" aria-label="Add shape"><svg width="23" height="23"><use href="#addshape"/></svg></button>
          <button class="tbtn" aria-label="Add nodes item"><svg width="23" height="23"><use href="#addnode"/></svg></button>
          <button class="tbtn" aria-label="Add arrow"><svg width="23" height="23"><use href="#addarrow"/></svg></button>
          <button class="tbtn" aria-label="Add attribute table"><svg width="23" height="23"><use href="#addtab"/></svg></button>
          <button class="tbtn" aria-label="Add HTML frame"><svg width="23" height="23"><use href="#addhtml"/></svg></button>
        </div>
        <div class="sheet flex-grow-1">
          <div></div>
          <!-- ticks are dashed lines: every 5, 25 and 50 mm -->
          <svg width="100%" height="19"><g transform="translate(-68 -135)">
            <g stroke="#444" shape-rendering="crispEdges" fill="none">
              <path d="M71 152H868" stroke-width="4" stroke-dasharray="1 8.725"/>
              <path d="M81 150.500H868" stroke-width="7" stroke-dasharray="1 47.625"/>
              <path d="M81 144.500H868" stroke-width="19" stroke-dasharray="1 96.250"/>
              <path d="M389.500 136v18" stroke="#e8558f"/>
            </g>
            <text x="82" y="147">-50</text><text x="179" y="147">0</text><text x="276" y="147">50</text><text x="373" y="147">100</text><text x="471" y="147">150</text><text x="568" y="147">200</text><text x="665" y="147">250</text><text x="762" y="147">300</text><text x="859" y="147">350</text>
          </g></svg>
          <svg width="19" height="100%"><g transform="translate(-49 -154)">
            <g stroke="#444" shape-rendering="crispEdges" fill="none">
              <path d="M66 158V632" stroke-width="4" stroke-dasharray="1 8.725"/>
              <path d="M64.500 187V632" stroke-width="7" stroke-dasharray="1 47.625"/>
              <path d="M58.500 187V632" stroke-width="19" stroke-dasharray="1 96.250"/>
              <path d="M49 262h19" stroke="#e8558f"/><path d="M49 278.500h19" stroke="#f6c3d3"/>
            </g>
            <text transform="translate(61 197) rotate(-90)">0</text><text transform="translate(61 300) rotate(-90)">50</text><text transform="translate(61 403) rotate(-90)">100</text><text transform="translate(61 500) rotate(-90)">150</text><text transform="translate(61 598) rotate(-90)">200</text>
          </g></svg>
          <svg class="canvas" width="100%" height="100%" role="img" aria-label="Composition with Map 0"><g transform="translate(-68 -154)">
            <path d="M181 190h579v410H181z" fill="#929491"/><path d="M178 187h579v410H178z" fill="#fcfefc"/>
            <path d="M182 202h444v314H182z" fill="#f7e39d"/>
            <path d="M182 202h115L182 297z" fill="#f3d673"/><path d="M297 202L182 297" stroke="#8a7434"/>
            <path d="M248 312L351 261 353 269 380 267 433 267 459 255 465 277 479 287 464 294 478 305 495 305 499 326 505 356 528 366 531 385 538 397 534 404 539 405 539 416 534 426 534 436 551 430 537 449 523 451 508 447 503 439 461 422 438 436 438 448 334 448 327 444 320 445 295 437 278 375 256 375z" fill="#b6dd67" stroke="#a9bd60"/>
            <path d="M182 312L191 300 206 297 232 285 248 290 260 289 285 278 300 271 307 262 309 239 320 230 336 216 352 208 379 204 403 210 412 212 432 202M412 212L422 237 434 272 449 300 458 318 462 320 473 315 487 325 503 329 515 343 532 342 531 370 524 380 499 397 498 403 509 411 513 418 510 428 503 436 502 442 523 499 523 516M182 404L196 405 202 411 210 426 208 443 200 466 208 485 215 490 226 491 252 477 261 470 284 441 292 440 301 442 307 440 312 443 320 463 330 474 343 478 356 478 365 487 394 482 408 492 415 487 422 492 426 498 429 510 434 516M226 491L221 516M365 487L355 516M455 516L460 510 466 510 471 516" fill="none" stroke="#db3f22" stroke-width="1.400"/>
            <path d="M182.500 202.500h443v313h-443z" fill="none" stroke="#c98a8a"/><path d="M182.500 202.500h443v313h-443z" fill="none" stroke="#333" stroke-dasharray="3 2"/>
            <g fill="#fff" stroke="#5f8fb5"><path d="M182.500 202.500h9v9h-9zM398.500 202.500h9v9h-9zM616.500 202.500h9v9h-9zM182.500 353.500h9v9h-9zM616.500 353.500h9v9h-9zM182.500 505.500h9v9h-9zM398.500 505.500h9v9h-9zM616.500 505.500h9v9h-9z"/></g>
            <text class="place" x="208" y="236">Guatemala</text><text class="place" x="399" y="365">Honduras</text>
            <path d="M398.500 271v15l3.500-3 3 6 2.500-1-2.500-6h5z" fill="#fff" stroke="#444"/>
          </g></svg>
        </div>
        <aside class="docks flex-shrink-0 d-flex flex-column">
          <div class="tabs d-flex align-items-end" role="tablist"><button role="tab" class="active" style="width:48px">Items</button><button role="tab">Command history</button></div>
          <div class="dock-title d-flex align-items-center justify-content-between"><span>Items</span><button class="text-dark" aria-label="Close Items"><svg width="9" height="9"><use href="#x"/></svg></button></div>
          <div class="items">
            <table>
              <thead><tr><th style="width:27px"><svg width="16" height="16"><use href="#eye"/></svg></th><th style="width:28px"><svg width="16" height="16"><use href="#lock"/></svg></th><th>Item</th></tr></thead>
              <tbody><tr><td><input class="tick d-block" type="checkbox" checked aria-label="Visible"></td><td><input class="tick d-block" type="checkbox" aria-label="Locked"></td><td class="fw-bold">Map 0</td></tr></tbody>
            </table>
          </div>
          <div class="tabs d-flex align-items-end mt-1" role="tablist"><button role="tab">Composition</button><button role="tab" class="active" style="padding:0 9px">Item properties</button><button role="tab">Atlas generation</button></div>
          <div class="dock-title d-flex align-items-center justify-content-between"><span>Item properties</span><button class="text-dark" aria-label="Close Item properties"><svg width="9" height="9"><use href="#x"/></svg></button></div>
          <div class="item-name fw-bold d-flex align-items-center">Map 0</div>
          <div class="props flex-grow-1 d-flex" style="min-height:0">
            <form class="flex-grow-1 overflow-hidden">
              <fieldset class="box d-flex flex-column" style="row-gap:10px">
                <legend><svg width="10" height="7"><use href="#tri"/></svg>Main properties</legend>
                <div class="line"><select class="field flat flex-grow-1" aria-label="Preview mode"><option>Cache</option></select><button type="button" class="plain ms-1">Update preview</button></div>
                <div class="line"><label class="lab" for="scale">Scale</label><input id="scale" class="field flex-grow-1" value="150000"><button type="button" class="dd" aria-label="Data defined override"><svg width="20" height="16"><use href="#override"/></svg></button></div>
                <div class="line"><label class="lab" for="rot">Map rotation</label><div class="spin flex-grow-1"><input id="rot" class="flex-grow-1" value="0.00 °"><span><button type="button" aria-label="Increase"><svg width="6" height="4"><use href="#up"/></svg></button><button type="button" aria-label="Decrease"><svg width="6" height="4"><use href="#down"/></svg></button></span></div><button type="button" class="dd" aria-label="Data defined override"><svg width="20" height="16"><use href="#override"/></svg></button></div>
                <div class="line short"><input id="draw" type="checkbox" class="tick" checked><label class="ms-1" for="draw">Draw map canvas items</label></div>
              </fieldset>
              <fieldset class="box d-flex flex-column" style="row-gap:10px">
                <legend><svg width="10" height="7"><use href="#tri"/></svg>Layers</legend>
                <div class="line"><input id="follow" type="checkbox" class="tick"><label class="ms-1 me-auto" for="follow">Follow visibility preset</label><select class="field flat" style="width:147px" aria-label="Visibility preset"><option>(none)</option></select><button type="button" class="dd" aria-label="Data defined override"><svg width="20" height="16"><use href="#override"/></svg></button></div>
                <div class="line"><input id="lockl" type="checkbox" class="tick"><label class="ms-1 me-auto" for="lockl">Lock layers</label><button type="button" class="plain" style="width:20px;height:19px" aria-label="Set layers"><svg class="m-auto" width="16" height="16" viewBox="0 0 16 16"><use href="#eye" width="16" height="16"/><path d="M10 11h5l-2.500 3z" fill="#111"/></svg></button><button type="button" class="dd" aria-label="Data defined override"><svg width="20" height="16"><use href="#override"/></svg></button></div>
                <div class="line short"><input id="locks" type="checkbox" class="tick" disabled><label class="ms-1 dim" for="locks">Lock styles for layers</label></div>
              </fieldset>
              <fieldset class="box"><legend><svg width="10" height="7"><use href="#tri"/></svg>Extents</legend></fieldset>
            </form>
            <div class="bar d-flex flex-column flex-shrink-0" aria-hidden="true">
              <svg width="14" height="15" viewBox="0 0 14 15"><path d="M4 10l3-3 3 3" fill="none" stroke="#555" stroke-width="2"/></svg>
              <div class="thumb d-flex align-items-center justify-content-center"><i></i></div>
              <svg class="mt-auto" width="14" height="15" viewBox="0 0 14 15"><path d="M4 5l3 3 3-3" fill="none" stroke="#555" stroke-width="2"/></svg>
            </div>
          </div>
        </aside>
      </div>
      <footer class="comp-status d-flex align-items-center">
        <span class="cell">x: 108.365 mm</span><span class="cell">y: 38.048 mm</span><span class="cell">page: 1</span>
        <select class="field zoom-box" style="height:19px" aria-label="Zoom level"><option>26.5%</option></select>
        <span class="ms-2">1 item selected</span>
        <svg class="ms-auto align-self-end" width="12" height="10" viewBox="0 0 12 10"><path d="M8 1h2v2H8zM8 4h2v2H8zM8 7h2v2H8zM5 4h2v2H5zM5 7h2v2H5zM2 7h2v2H2z" fill="#c2c4c2"/></svg>
      </footer>
    </div>
  </section>
</div>
<script src="https://cdn.jsdelivr.net/npm/bootstrap@5.3.0/dist/js/bootstrap.bundle.min.js"></script>
</body>
</html>
